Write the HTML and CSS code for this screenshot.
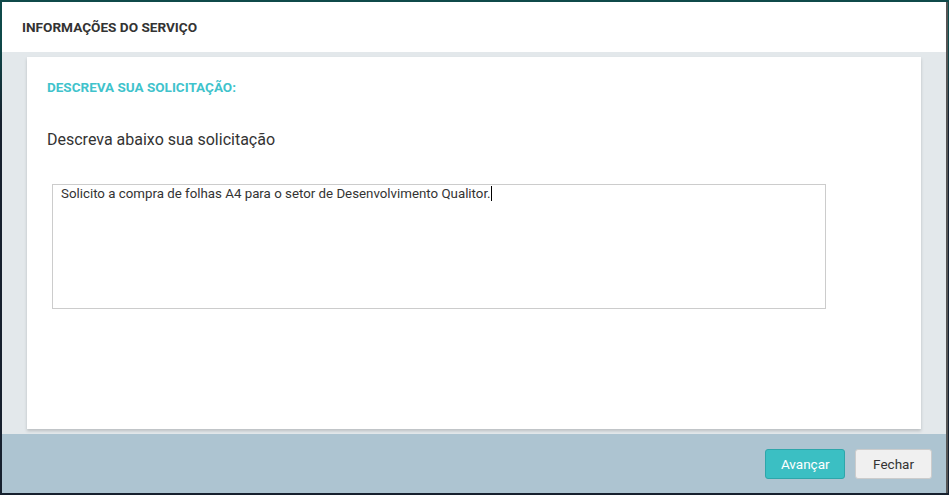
FILE: index.html
```html
<!DOCTYPE html>
<html lang="pt-BR">
<head>
<meta charset="utf-8"/>
<meta content="width=device-width, initial-scale=1.0" name="viewport"/>
<title>Informações do Serviço</title>
<link rel="stylesheet" href="styles.css">
</head>
<body>
<div class="modal">
<div class="modal-header">
<h1>Informações do Serviço</h1>
</div>
<div class="modal-body">
<div class="card">
<h2>Descreva sua solicitação:</h2>
<p class="label">Descreva abaixo sua solicitação</p>
<div class="textbox">Solicito a compra de folhas A4 para o setor de Desenvolvimento Qualitor.<span class="caret"></span></div>
</div>
</div>
<div class="modal-footer">
<button class="btn btn-primary">Avançar</button>
<button class="btn btn-close">Fechar</button>
</div>
</div>
</body>
</html>
```

FILE: styles.css
```css
html, body {
    height: 100%;
}
body {
    margin: 0;
    padding: 2px 3px 2px 2px;
    box-sizing: border-box;
    background: linear-gradient(180deg, #0f4a4a 0, #0f4a4a 40px, #16202e 120px, #16202e 100%);
    font-family: Roboto, 'Liberation Sans', sans-serif;
    color: #333;
}
.modal {
    height: 100%;
    display: flex;
    flex-direction: column;
    background: #e3e8eb;
    box-shadow: 2px 0 0 #555;
}
.modal-header {
    height: 50px;
    background: #fff;
    display: flex;
    align-items: center;
    padding: 0 20px;
}
.modal-header h1 {
    margin: 0;
    font-size: 13.6px;
    font-weight: bold;
    text-transform: uppercase;
    color: #333;
}
.modal-body {
    flex: 1;
    padding: 5px 25px;
}
.card {
    height: 100%;
    box-sizing: border-box;
    background: #fff;
    box-shadow: 0 2px 3px rgba(0, 0, 0, 0.18);
    padding: 22px 20px;
}
.card h2 {
    margin: 0;
    font-size: 13.5px;
    font-weight: bold;
    text-transform: uppercase;
    color: #3fc3cc;
}
.label {
    margin: 35px 0 0;
    font-size: 16px;
    color: #333;
}
.textbox {
    margin: 35px 75px 0 5px;
    height: 125px;
    box-sizing: border-box;
    border: 1px solid #ccc;
    padding: 1px 8px;
    font-size: 13.3px;
    color: #333;
}
.caret {
    display: inline-block;
    width: 1px;
    height: 15px;
    background: #000;
    vertical-align: -3px;
}
.modal-footer {
    height: 59px;
    background: #adc4d1;
    display: flex;
    justify-content: flex-end;
    align-items: center;
    gap: 10px;
    padding: 0 14px 0 0;
}
.btn {
    height: 30px;
    padding: 0 14.5px;
    font-family: Roboto, 'Liberation Sans', sans-serif;
    font-size: 13.5px;
    color: #333;
    background: #f0f0f0;
    border: 1px solid #ccc;
    border-radius: 3px;
    cursor: pointer;
}
.btn-primary {
    background: #3bbfc3;
    border-color: #2ea6aa;
    color: #fff;
}
.btn-close {
    padding: 0 17px;
}
```
